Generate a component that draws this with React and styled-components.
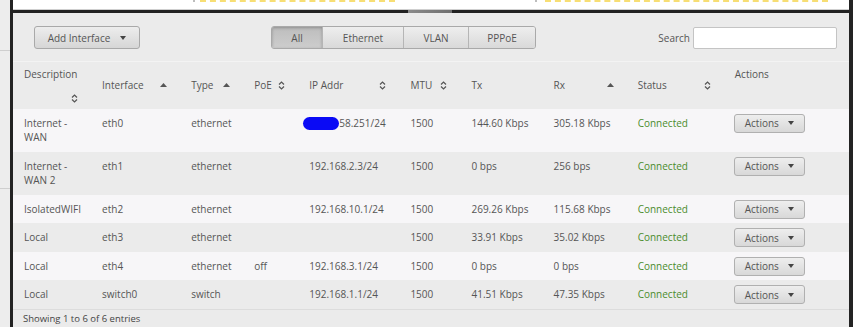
import React from "react";
import styled, { createGlobalStyle } from "styled-components";

const Global = createGlobalStyle`
  html, body {
    margin: 0;
    padding: 0;
    background: #eeeeee;
    font-family: "Open Sans", "DejaVu Sans", sans-serif;
  }
  * { box-sizing: border-box; }
`;

const Page = styled.div`
  display: flex;
  width: 853px;
  height: 327px;
  overflow: hidden;
`;

const Gutter = styled.div`
  width: 10px;
  flex: none;
  display: flex;
  flex-direction: column;
  background: #ededed;

  & .rule {
    height: 1px;
    background: #cfcfcf;
  }
`;

const Frame = styled.div`
  flex: 1;
  display: flex;
  flex-direction: column;
  border-left: 3px solid #232323;
  border-right: 4px solid #232323;
  min-width: 0;
`;

const TopStrip = styled.div`
  flex: none;
  height: 10px;
  background: #ffffff;
  display: flex;
  align-items: flex-start;
  border-bottom: 1px solid #cfcfcf;
`;

const Stub = styled.div`
  flex: none;
  width: ${(p) => p.$w}px;
  margin-left: ${(p) => p.$ml}px;
  height: 2px;
  border-bottom: 2px dashed ${(p) => (p.$tick ? "#bdbdbd" : "#f7de74")};
`;

const Separator = styled.div`
  flex: none;
  height: 3px;
  background: linear-gradient(to right, #222 0, #222 395px, #8a8a8a 395px, #6f6f6f 439px, #222 439px);
`;

const Panel = styled.div`
  flex: 1;
  background: #ebebeb;
  display: flex;
  flex-direction: column;
`;

const Toolbar = styled.div`
  flex: none;
  display: flex;
  align-items: center;
  padding: 13px 12px 12px 21px;
`;

const Button = styled.button`
  font-family: inherit;
  font-size: 10px;
  color: #555;
  height: 23px;
  width: 106px;
  padding: 0;
  border: 1px solid #a9a9a9;
  border-radius: 3px;
  background: linear-gradient(#ededed, #d6d6d6);
  display: flex;
  align-items: center;
  justify-content: center;
  gap: 10px;
  white-space: nowrap;
`;

const Caret = styled.span`
  width: 0;
  height: 0;
  border-left: 3.5px solid transparent;
  border-right: 3.5px solid transparent;
  border-top: 4px solid #444;
`;

const Segments = styled.div`
  display: flex;
  margin-left: 131px;
  border: 1px solid #a9a9a9;
  border-radius: 3px;
  overflow: hidden;
`;

const Segment = styled.button`
  font-family: inherit;
  font-size: 10px;
  color: #555;
  height: 21px;
  width: ${(p) => p.$w}px;
  border: none;
  border-left: ${(p) => (p.$first ? "none" : "1px solid #b5b5b5")};
  background: ${(p) => (p.$active ? "linear-gradient(#bdbdbd, #cdcdcd)" : "linear-gradient(#eeeeee, #d9d9d9)")};
  box-shadow: ${(p) => (p.$active ? "inset 0 1px 3px rgba(0,0,0,0.25)" : "none")};
  padding: 0;
`;

const SearchBox = styled.label`
  margin-left: auto;
  display: flex;
  align-items: center;
  gap: 3px;
  font-size: 10px;
  color: #555;

  & input {
    width: 144px;
    height: 22px;
    border: 1px solid #c4c4c4;
    border-radius: 2px;
    background: #fff;
  }
`;

const Table = styled.table`
  width: 100%;
  table-layout: fixed;
  border-collapse: collapse;
  font-size: 10px;
  color: #555;
`;

const HeadRow = styled.tr`
  height: 47px;
  border-top: 1px solid #f3f3f3;
`;

const Th = styled.th`
  font-weight: normal;
  text-align: left;
  padding: 0 13px 0 11px;
  vertical-align: ${(p) => p.$valign || "middle"};
  padding-top: ${(p) => (p.$valign === "top" ? "5px" : "0")};
`;

const HeadInner = styled.div`
  display: flex;
  flex-wrap: wrap;
  align-items: center;
  justify-content: space-between;
  row-gap: 13px;

  & svg {
    margin-left: auto;
    flex: none;
  }
`;

const Row = styled.tr`
  background: ${(p) => (p.$odd ? "#ebebeb" : "#f7f6f8")};
`;

const Td = styled.td`
  padding: 7px 7px 7px 11px;
  line-height: 14.5px;
  vertical-align: top;
  color: ${(p) => (p.$ok ? "#4a8c2c" : "#555")};
`;

const ActionCell = styled.td`
  padding: 5px 10px 4px 10px;
  vertical-align: top;
`;

const ActionButton = styled.button`
  font-family: inherit;
  font-size: 10px;
  color: #555;
  width: 71px;
  height: 19px;
  border: 1px solid #b0b0b0;
  border-radius: 3px;
  background: linear-gradient(#eeeeee, #d8d8d8);
  display: flex;
  align-items: center;
  justify-content: center;
  gap: 9px;
  padding: 0;
`;

const Masked = styled.span`
  display: inline-block;
  width: 36px;
  height: 13px;
  border-radius: 7px;
  background: #0a0af5;
  vertical-align: -3px;
  margin-left: -6px;
`;

const Footer = styled.div`
  border-top: 1px solid #dcdcdc;
  padding: 2px 10px;
  font-size: 9.5px;
  color: #444;
`;

const SortUp = () => (
  <svg width="7" height="4" viewBox="0 0 7 4">
    <path d="M0 4 L3.5 0 L7 4 Z" fill="#555" />
  </svg>
);

const SortBoth = () => (
  <svg width="7" height="9" viewBox="0 0 7 9">
    <path d="M1 3.5 L3.5 1 L6 3.5 M1 5.5 L3.5 8 L6 5.5" fill="none" stroke="#555" strokeWidth="1.2" />
  </svg>
);

const widths = [78, 89, 63, 55, 101, 61, 82, 84, 97, 125];

const rows = [
  ["Internet - WAN", "eth0", "ethernet", "", "mask", "1500", "144.60 Kbps", "305.18 Kbps"],
  ["Internet - WAN 2", "eth1", "ethernet", "", "192.168.2.3/24", "1500", "0 bps", "256 bps"],
  ["IsolatedWIFI", "eth2", "ethernet", "", "192.168.10.1/24", "1500", "269.26 Kbps", "115.68 Kbps"],
  ["Local", "eth3", "ethernet", "", "", "1500", "33.91 Kbps", "35.02 Kbps"],
  ["Local", "eth4", "ethernet", "off", "192.168.3.1/24", "1500", "0 bps", "0 bps"],
  ["Local", "switch0", "switch", "", "192.168.1.1/24", "1500", "41.51 Kbps", "47.35 Kbps"],
];

const headers = [
  ["Description", "both"],
  ["Interface", "up"],
  ["Type", "up"],
  ["PoE", "both"],
  ["IP Addr", "both"],
  ["MTU", "both"],
  ["Tx", null],
  ["Rx", "up"],
  ["Status", "both"],
];

export default function App() {
  return (
    <>
      <Global />
      <Page>
        <Gutter>
          <div style={{ height: 50 }} />
          <div className="rule" />
          <div style={{ height: 137 }} />
          <div className="rule" />
        </Gutter>
        <Frame>
          <TopStrip>
            <Stub $ml={180} $w={2} $tick />
            <Stub $ml={5} $w={195} />
            <Stub $ml={140} $w={2} $tick />
            <Stub $ml={8} $w={283} />
          </TopStrip>
          <Separator />
          <Panel>
            <Toolbar>
              <Button>
                Add Interface <Caret />
              </Button>
              <Segments>
                <Segment $w={50} $first $active>All</Segment>
                <Segment $w={81}>Ethernet</Segment>
                <Segment $w={65}>VLAN</Segment>
                <Segment $w={67}>PPPoE</Segment>
              </Segments>
              <SearchBox>
                Search <input type="text" />
              </SearchBox>
            </Toolbar>
            <Table>
              <colgroup>
                {widths.map((w, i) => (
                  <col key={i} style={{ width: w }} />
                ))}
              </colgroup>
              <thead>
                <HeadRow>
                  {headers.map(([label, sort]) => (
                    <Th key={label}>
                      <HeadInner>
                        <span>{label}</span>
                        {sort === "up" && <SortUp />}
                        {sort === "both" && <SortBoth />}
                      </HeadInner>
                    </Th>
                  ))}
                  <Th $valign="top">Actions</Th>
                </HeadRow>
              </thead>
              <tbody>
                {rows.map((r, i) => (
                  <Row key={i} $odd={i % 2 === 1}>
                    <Td>{r[0]}</Td>
                    <Td>{r[1]}</Td>
                    <Td>{r[2]}</Td>
                    <Td>{r[3]}</Td>
                    <Td>
                      {r[4] === "mask" ? (
                        <>
                          <Masked />
                          58.251/24
                        </>
                      ) : (
                        r[4]
                      )}
                    </Td>
                    <Td>{r[5]}</Td>
                    <Td>{r[6]}</Td>
                    <Td>{r[7]}</Td>
                    <Td $ok>Connected</Td>
                    <ActionCell>
                      <ActionButton>
                        Actions <Caret />
                      </ActionButton>
                    </ActionCell>
                  </Row>
                ))}
              </tbody>
            </Table>
            <Footer>Showing 1 to 6 of 6 entries</Footer>
          </Panel>
        </Frame>
      </Page>
    </>
  );
}
